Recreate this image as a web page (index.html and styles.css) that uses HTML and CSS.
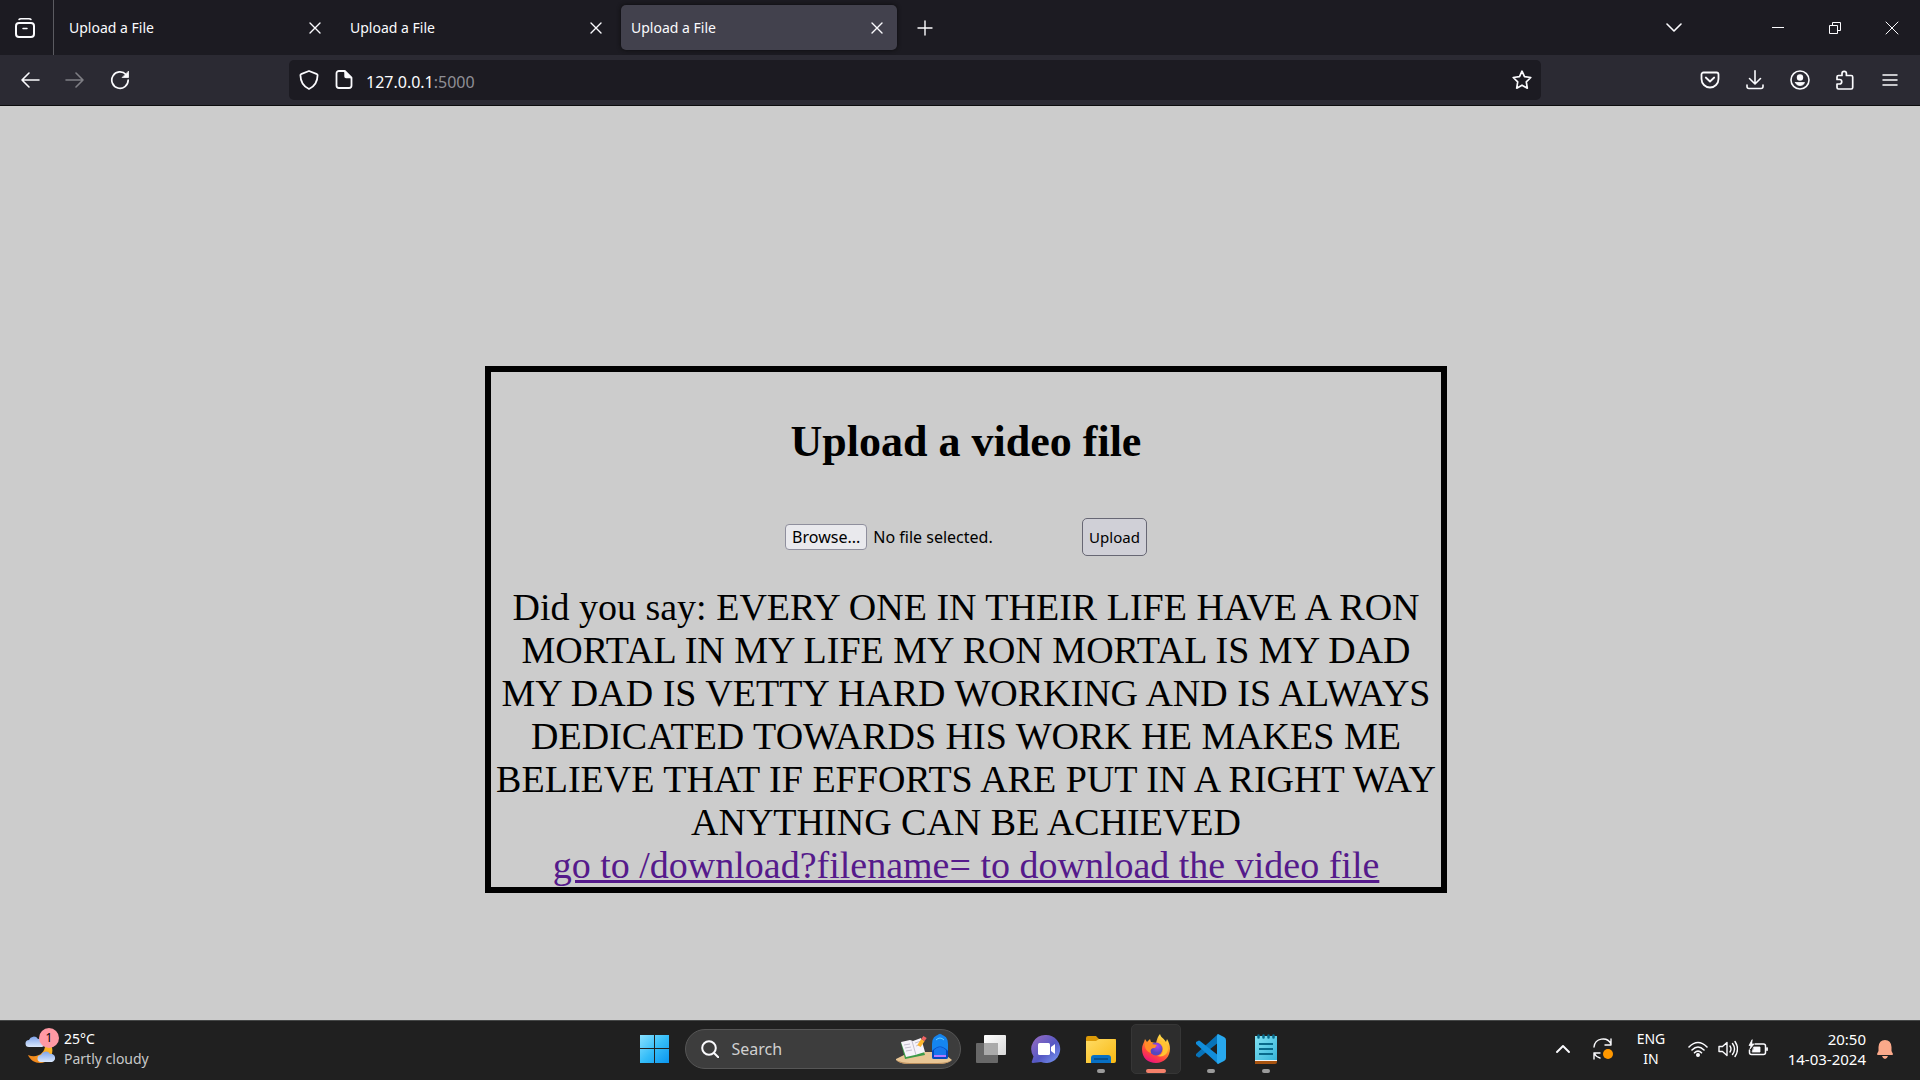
FILE: index.html
```html
<!DOCTYPE html>
<html lang="en">
<head>
<meta charset="utf-8">
<title>Upload a File</title>
<link rel="stylesheet" href="styles.css">
</head>
<body>
<header class="browser">
  <div class="tabstrip">
    <button class="view-btn" aria-label="Firefox View">
      <svg class="icon" width="20" height="20" viewBox="0 0 20 20"><rect x="1" y="5" width="18" height="14" rx="3" stroke-width="2"/><path d="M4 1.500C4.500.8 5 .8 6 .8h8c1 0 1.500 0 2 .7M8 10.500h4" stroke-width="1.500"/></svg>
    </button>
    <div class="tabs">
      <div class="tab"><span>Upload a File</span><button class="tab-close" aria-label="Close tab"><svg class="icon" width="12" height="12" viewBox="0 0 12 12"><path d="M1 1l10 10M11 1L1 11"/></svg></button></div>
      <div class="tab"><span>Upload a File</span><button class="tab-close" aria-label="Close tab"><svg class="icon" width="12" height="12" viewBox="0 0 12 12"><path d="M1 1l10 10M11 1L1 11"/></svg></button></div>
      <div class="tab tab-active"><span>Upload a File</span><button class="tab-close" aria-label="Close tab"><svg class="icon" width="12" height="12" viewBox="0 0 12 12"><path d="M1 1l10 10M11 1L1 11"/></svg></button></div>
      <button class="tool" aria-label="New tab"><svg class="icon" width="16" height="16" viewBox="0 0 16 16"><path d="M8 1v14M1 8h14"/></svg></button>
    </div>
    <button class="tool all-tabs" aria-label="List all tabs"><svg class="icon" width="16" height="16" viewBox="0 0 16 16"><path d="M1 4l7 7 7-7" stroke-width="1.600"/></svg></button>
    <div class="window-buttons">
      <button aria-label="Minimize"><svg class="icon sharp" width="12" height="12" viewBox="0 0 12 12"><path d="M0 5.500h12"/></svg></button>
      <button aria-label="Restore"><svg class="icon sharp" width="12" height="12" viewBox="0 0 12 12"><path d="M.5 3.500h8v8h-8zM3.500 3V.5h8v8H9"/></svg></button>
      <button aria-label="Close"><svg class="icon thin" width="14" height="14" viewBox="0 0 14 14"><path d="M1 1l12 12M13 1L1 13"/></svg></button>
    </div>
  </div>
  <div class="toolbar">
    <button class="tool" aria-label="Back"><svg class="icon" width="20" height="20" viewBox="0 0 20 20"><path d="M19 10H2M9 3l-7 7 7 7" stroke-width="1.600"/></svg></button>
    <button class="tool" aria-label="Forward" disabled><svg class="icon" width="20" height="20" viewBox="0 0 20 20"><path d="M1 10h17M11 3l7 7-7 7" stroke-width="1.600"/></svg></button>
    <button class="tool" aria-label="Reload"><svg class="icon" width="20" height="20" viewBox="0 0 20 20"><path d="M16 4.500A8.200 8.200 0 1 0 18.200 10" stroke-width="1.700"/><path class="solid" d="M18.500 1.500v6h-6z" stroke-width=".8"/></svg></button>
    <div class="urlbar">
      <button class="url-btn" aria-label="Tracking protection"><svg class="icon" width="20" height="20" viewBox="0 0 20 20"><path d="M10 1l8 3.200c.4.200.6.400.6.800C18.500 12 15.500 16.500 10 19 4.500 16.500 1.500 12 1.400 5c0-.4.200-.6.600-.8z" stroke-width="1.800"/></svg></button>
      <button class="url-btn" aria-label="Site information"><svg class="icon" width="20" height="20" viewBox="0 0 20 20"><path d="M10.500 1H5a2.500 2.500 0 0 0-2.500 2.500v12A2.500 2.500 0 0 0 5 18h10a2.500 2.500 0 0 0 2.500-2.500V8z" stroke-width="1.800"/><path class="solid" d="M11 1l6.500 6.500H12a1 1 0 0 1-1-1z"/></svg></button>
      <div class="address">127.0.0.1<span>:5000</span></div>
      <button class="url-btn" aria-label="Bookmark this page"><svg class="icon" width="20" height="20" viewBox="0 0 20 20"><path d="M10 1.200l2.500 5.500 6.300.8-4.500 4.300 1 6.400-5.300-3-5.300 3 1-6.400L1.200 7.500l6.300-.8z" stroke-width="1.700"/></svg></button>
    </div>
    <button class="tool" aria-label="Save to Pocket"><svg class="icon" width="20" height="20" viewBox="0 0 20 20"><path d="M3.500 2.500h13a2 2 0 0 1 2 2V9a8.500 8.500 0 0 1-17 0V4.500a2 2 0 0 1 2-2zM5.800 7.500l4.200 4 4.200-4" stroke-width="1.800"/></svg></button>
    <button class="tool" aria-label="Downloads"><svg class="icon" width="20" height="20" viewBox="0 0 20 20"><path d="M10 .8v12.500M4.500 8.500l5.500 5.500 5.500-5.500M2 15v1.500a2 2 0 0 0 2 2h12a2 2 0 0 0 2-2V15" stroke-width="1.600"/></svg></button>
    <button class="tool" aria-label="Account"><svg class="icon" width="20" height="20" viewBox="0 0 20 20"><circle cx="10" cy="10" r="9" stroke-width="1.600"/><circle class="solid" cx="10" cy="7.500" r="2.500"/><path class="solid" d="M5.500 12.500h9c-.6 2-2.300 3-4.500 3s-3.900-1-4.500-3z" stroke-width=".8"/></svg></button>
    <button class="tool" aria-label="Extensions"><svg class="icon" width="20" height="20" viewBox="0 0 20 20"><path d="M2 9V7a1.500 1.500 0 0 1 1.500-1.500H7v-2a2.200 2.200 0 0 1 4.400 0v2h4.800A1.500 1.500 0 0 1 17.700 7v10.500A1.500 1.500 0 0 1 16.200 19H3.500A1.500 1.500 0 0 1 2 17.500V14h2.500a2.200 2.200 0 0 0 0-4.500H2z" stroke-width="1.700"/></svg></button>
    <button class="tool" aria-label="Menu"><svg class="icon" width="16" height="16" viewBox="0 0 16 16"><path d="M1 3h14M1 8h14M1 13h14" stroke-width="1.500"/></svg></button>
  </div>
</header>

<main class="page">
  <section class="card">
    <h1>Upload a video file</h1>
    <form class="upload-form">
      <div class="file-field">
        <input class="file-input" type="file" id="video" accept="video/*">
        <label class="browse" for="video">Browse...</label>
        <span>No file selected.</span>
      </div>
      <button class="upload" type="submit">Upload</button>
    </form>
    <p>Did you say: EVERY ONE IN THEIR LIFE HAVE A RON MORTAL IN MY LIFE MY RON MORTAL IS MY DAD MY DAD IS VETTY HARD WORKING AND IS ALWAYS DEDICATED TOWARDS HIS WORK HE MAKES ME BELIEVE THAT IF EFFORTS ARE PUT IN A RIGHT WAY ANYTHING CAN BE ACHIEVED</p>
    <a href="#download">go to /download?filename= to download the video file</a>
  </section>
</main>

<footer class="taskbar">
  <button class="weather">
    <span class="weather-icon">
      <svg width="30" height="30" viewBox="0 0 30 30">
        <defs>
          <linearGradient id="cloud" x1="0" y1="0" x2="0" y2="1"><stop offset="0" stop-color="#7fa4ea"/><stop offset="1" stop-color="#dbe9fd"/></linearGradient>
          <linearGradient id="moon" x1="1" y1="0" x2="0" y2="1"><stop offset="0" stop-color="#ffc52b"/><stop offset="1" stop-color="#ef7a18"/></linearGradient>
        </defs>
        <path fill="url(#moon)" d="M25 9c6 9 0 20-10 20-5 0-10-3-12-8 9 4 18-2 17-11z"/>
        <path fill="url(#cloud)" d="M4 13a3.500 3.500 0 0 1 0-7 5 5 0 0 1 9-1 5 4 0 0 1 4 8z"/>
        <path fill="url(#cloud)" d="M16 28a3.500 3.500 0 0 1 0-7 5 5 0 0 1 9-1 4 4 0 0 1 2 8z"/>
      </svg>
      <span class="badge">1</span>
    </span>
    <span class="weather-text"><span>25°C</span><span class="dim">Partly cloudy</span></span>
  </button>

  <nav class="apps">
    <button class="app" aria-label="Start"><svg width="30" height="30" viewBox="0 0 30 30"><defs><linearGradient id="win" gradientUnits="userSpaceOnUse" x1="1" y1="1" x2="29" y2="29"><stop offset="0" stop-color="#86e0ff"/><stop offset=".5" stop-color="#35bdf8"/><stop offset="1" stop-color="#0a95ee"/></linearGradient></defs><path fill="url(#win)" d="M0 1h14v13H0zM15 1h14v13H15zM0 15h14v14H0zM15 15h14v14H15z"/></svg></button>
    <button class="search">
      <svg class="icon" width="18" height="18" viewBox="0 0 18 18"><circle cx="8" cy="8" r="6.800" stroke-width="2"/><path d="M13 13l4.500 4.500" stroke-width="2"/></svg>
      <span>Search</span>
      <svg class="art" width="58" height="32" viewBox="0 0 58 32">
        <path fill="#e9c695" d="M1 26l14-7h32l10 8q-4 4-14 4H14Q5 31 1 27z"/>
        <path fill="#b98d5c" d="M1 27q6 3 14 3h28q10 0 14-3-4 4-14 4H14Q5 31 1 27z"/>
        <path fill="#3d9b49" d="M6 10l19-3 5 15-20 4z"/><path fill="#f6f3fa" d="M6 9l9-2 3 1 8-3 4 14-10 3-9 2z"/>
        <path stroke="#c4c0cf" stroke-width="1" fill="none" d="M17 8l4 14M9 12l6-1M10 15l6-1M11 18l6-1M20 10l6-2M21 13l6-2"/>
        <path stroke="#ffb52c" stroke-width="4" d="M24 13l4-6"/><path stroke="#f06262" stroke-width="4" d="M28 7l2-3"/>
        <path fill="none" stroke="#1682e8" stroke-width="1.500" d="M42 4q3-5 6 0"/>
        <path fill="#1585f0" d="M37 11q0-9 8-9t8 9v13q0 2-2 2H39q-2 0-2-2z"/><path fill="#0648bd" d="M37 18q8-9 16 0v6q0 2-2 2H39q-2 0-2-2z"/><path fill="#1877ed" d="M39 17q6-6 12 0v5H39z"/><path stroke="#b678ff" stroke-width="2" d="M39 23h12"/><path stroke="#63d0ff" stroke-width="1" d="M41 7q4-4 8 0" fill="none"/>
      </svg>
    </button>
    <button class="app" aria-label="Task view"><svg width="30" height="30" viewBox="0 0 30 30"><defs><linearGradient id="tv" x1="0" y1="0" x2="1" y2="1"><stop offset="0" stop-color="#fff"/><stop offset="1" stop-color="#d8d8d8"/></linearGradient></defs><rect x="8" y="1" width="22" height="20" rx="1" fill="url(#tv)"/><rect y="9" width="22" height="20" rx="1" fill="#686868"/><path fill="#aaa" d="M8 9h14v12H8z"/></svg></button>
    <button class="app" aria-label="Chat"><svg width="30" height="30" viewBox="0 0 30 30"><defs><linearGradient id="chat" x1="0" y1="0" x2="1" y2="1"><stop offset="0" stop-color="#9c6cc0"/><stop offset=".55" stop-color="#5558c4"/><stop offset="1" stop-color="#7a9cf5"/></linearGradient></defs><path fill="url(#chat)" d="M15 1a14 14 0 1 1-5 27L2 29q-2 0-1-2l1.500-4.500A14 14 0 0 1 15 1z"/><rect x="7" y="9" width="12" height="12" rx="1.500" fill="#fff"/><path fill="#fff" d="M20 13l4-3v10l-4-3z"/></svg></button>
    <button class="app running" aria-label="File Explorer"><svg width="30" height="30" viewBox="0 0 30 30"><defs><linearGradient id="folder" x1="0" y1="0" x2="1" y2="1"><stop offset="0" stop-color="#ffdc65"/><stop offset="1" stop-color="#f9b912"/></linearGradient></defs><path fill="#dc9a08" d="M0 4q0-2 2-2h8l3 3h17v9H0z"/><path fill="url(#folder)" d="M0 7h10l3-2h15q2 0 2 2v20q0 2-2 2H0z"/><path fill="#0870c4" d="M5 29v-5q0-3 3-3h14q3 0 3 3v5z"/><path stroke="#064780" stroke-width="1.500" d="M8 25h14"/></svg></button>
    <button class="app current" aria-label="Firefox"><svg width="30" height="30" viewBox="0 0 30 30"><defs><linearGradient id="fox" x1=".8" y1="0" x2=".3" y2="1"><stop offset="0" stop-color="#fff052"/><stop offset=".4" stop-color="#ffa029"/><stop offset=".72" stop-color="#ff443f"/><stop offset="1" stop-color="#eb1180"/></linearGradient><radialGradient id="globe" cx=".6" cy=".3"><stop offset="0" stop-color="#ad43ef"/><stop offset="1" stop-color="#5348be"/></radialGradient></defs><path fill="url(#fox)" d="M19 0c1 4 4 4 6 8l1-3c7 11 1 24-11 24C7 29 1 24 1 15c0-4 2-6 3-10l2 3 3-3 1 3 5 1c1-4 2-7 4-9z"/><circle cx="15" cy="15" r="6.500" fill="url(#globe)"/><path fill="#ff8d27" d="M4 9q5-2 7 1l5 1-2 3c-4 0-5 2-4 5-4-1-7-5-6-10z"/><path fill="#ffc332" d="M17 8q5 2 5 7 0 6-6 7 9 2 11-6 0-5-4-9z"/></svg></button>
    <button class="app running" aria-label="Visual Studio Code"><svg width="30" height="30" viewBox="0 0 30 30"><path fill="#0873b9" d="M0 20q-1 1 0 2l2 1q1 1 2 0L23 8V1q-1-1-2 0z"/><path fill="#118ddb" d="M0 10q-1-1 0-2l2-1q1-1 2 0l19 15v7q-1 1-2 0z"/><path fill="#28a8ee" d="M22 0l6 3q2 1 2 3v18q0 2-2 3l-6 3q-1 0-1-2V2q0-2 1-2z"/></svg></button>
    <button class="app running" aria-label="Notepad"><svg width="30" height="30" viewBox="0 0 30 30"><defs><linearGradient id="note" x1="0" y1="0" x2="1" y2="1"><stop offset="0" stop-color="#82e2f3"/><stop offset="1" stop-color="#36b4d8"/></linearGradient></defs><path fill="#a8530f" d="M4 25h22v3q0 2-2 2H4z"/><path fill="#f4f4f4" d="M4 24h22v3H4z"/><path fill="url(#note)" d="M4 2h22v24H4z"/><path stroke="#086a8b" stroke-width="2" d="M8 10h14M8 15h14M8 20h14"/><path stroke="#086a8b" stroke-width="2.500" stroke-linecap="round" d="M7.500 1.500v2M12.500 1.500v2M17.500 1.500v2M22.500 1.500v2"/></svg></button>
  </nav>

  <div class="tray">
    <button class="tray-btn" aria-label="Hidden icons"><svg class="icon" width="14" height="14" viewBox="0 0 14 14"><path d="M1 10l6-6 6 6" stroke-width="1.900"/></svg></button>
    <button class="tray-btn" aria-label="Updates"><svg class="icon thin" width="22" height="22" viewBox="0 0 22 22"><path d="M2 9a9 9 0 0 1 17-3M19 1v6h-6M2 21v-6h6M2 15q2 4 6 5" stroke-width="1.400"/><circle cx="16" cy="16" r="5" fill="#ff9800" stroke="none"/></svg></button>
    <button class="language"><span>ENG</span><span>IN</span></button>
    <button class="status" aria-label="Network, sound, battery">
      <svg class="icon" width="20" height="20" viewBox="0 0 20 20"><path d="M1 8q9-9 18 0M4 11q6-6 12 0M6.500 13.800q3.500-3.500 7 0" stroke-width="1.600"/><circle class="solid" cx="10" cy="16" r="1.300"/></svg>
      <svg class="icon" width="20" height="20" viewBox="0 0 20 20"><path d="M1 7.500h3.500L9 3.500v13l-4.500-4H1zM12 7q2 3 0 6M14.500 4.500q4 5.500 0 11M17 2.500q5 7.500 0 15" stroke-width="1.400"/></svg>
      <svg class="icon" width="20" height="20" viewBox="0 0 20 20"><path d="M7 5h8.500a2 2 0 0 1 2 2v6.500a2 2 0 0 1-2 2h-12a2 2 0 0 1-2-2V11" stroke-width="1.500"/><path class="solid" d="M6 8h6v5H4.500zM18.500 9v2.500h1V9zM4 1L1 6.500h2L2 10l4-5H4z" stroke-width=".8"/></svg>
    </button>
    <button class="clock"><span>20:50</span><span>14-03-2024</span></button>
    <button class="bell" aria-label="Notifications"><svg width="18" height="20" viewBox="0 0 18 20"><path fill="#fba98a" d="M9 1q6 0 6.500 7v4l1.500 3q0 1-1 1H2q-1 0-1-1l1.500-3V8Q3 1 9 1zM6 17h6q-1 3-3 3t-3-3z"/></svg></button>
  </div>
</footer>
</body>
</html>
```
FILE: styles.css
```css
* {
  box-sizing: border-box;
}

body {
  margin: 0;
  min-height: 100vh;
  display: flex;
  flex-direction: column;
  font-family: "Noto Sans", sans-serif;
  font-size: 14px;
  color: #fbfbfe;
}

button {
  margin: 0;
  padding: 0;
  border: 0;
  background: none;
  color: inherit;
  font: inherit;
}

svg {
  display: block;
  flex: none;
}

.icon {
  fill: none;
  stroke: #fbfbfe;
  stroke-width: 1.4px;
  stroke-linecap: round;
  stroke-linejoin: round;
}

.solid {
  fill: #fbfbfe;
}

.sharp {
  stroke-width: 1px;
  stroke-linecap: butt;
  stroke-linejoin: miter;
}

.thin {
  stroke-width: 1px;
}

/* Browser window */
.browser {
  border-bottom: 1px solid #0c0c0d;
}

.tabstrip {
  display: flex;
  height: 55px;
  background: #1c1b22;
}

.view-btn {
  width: 54px;
  padding-left: 15px;
  border-right: 1px solid #5b5b61;
}

.tabs {
  flex: 1;
  display: flex;
  align-items: center;
  gap: 5px;
  padding-left: 5px;
}

.tab {
  width: 276px;
  height: 45px;
  padding: 0 14px 0 10px;
  display: flex;
  align-items: center;
  justify-content: space-between;
  border-radius: 5px;
}

.tab-active {
  background: #42414d;
  box-shadow: 0 0 4px #0c0c0d;
}

.tool {
  width: 45px;
  height: 45px;
  display: grid;
  place-items: center;
}

.tool:disabled {
  opacity: 0.4;
}

.all-tabs {
  margin: 5px 53px 0 0;
}

.window-buttons {
  display: flex;
}

.window-buttons button {
  width: 57px;
  display: grid;
  place-items: center;
}

.toolbar {
  display: flex;
  align-items: center;
  height: 50px;
  padding: 0 8px 0 7px;
  background: #2b2a33;
}

.urlbar {
  flex: 1;
  display: flex;
  align-items: center;
  height: 40px;
  margin: 0 146px 0 147px;
  padding: 0 2px;
  border-radius: 5px;
  background: #1c1b22;
}

.url-btn {
  width: 35px;
  display: grid;
  place-items: center;
}

.address {
  flex: 1;
  padding: 3px 0 0 5px;
  font-size: 16px;
}

.address span {
  color: #8f8f96;
}

/* Page */
.page {
  flex: 1;
  padding: 260px 0 24px 12px;
  background: #ccc;
  color: #000;
}

.card {
  width: 962px;
  max-width: 100%;
  margin: 0 auto;
  border: 6px solid #000;
  font-family: "Liberation Serif", serif;
  font-size: 38px;
  line-height: 43px;
  text-align: center;
}

.card h1 {
  margin: 44px 0 50px;
  font-size: 44px;
  line-height: 52px;
}

.card p {
  margin: 0;
}

.card a {
  display: block;
  color: #551a8b;
}

.upload-form {
  display: flex;
  justify-content: center;
  align-items: center;
  margin-bottom: 30px;
  font-family: "Noto Sans", sans-serif;
  font-size: 15px;
  line-height: 24px;
}

.file-field {
  position: relative;
  display: flex;
  align-items: center;
  gap: 6px;
  width: 297px;
  font-size: 16px;
}

.file-input {
  position: absolute;
  inset: 0;
  opacity: 0;
}

.browse {
  padding: 0 6px;
  border: 1px solid #8f8f9d;
  border-radius: 4px;
  background: #e9e9ed;
}

.upload {
  height: 38px;
  padding: 0 6px;
  border: 1px solid #676774;
  border-radius: 5px;
  background: #d0d0d7;
}

/* Taskbar */
.taskbar {
  display: grid;
  grid-template-columns: 1fr auto 1fr;
  height: 60px;
  padding-bottom: 3px;
  border-top: 1px solid #454747;
  background: #202020;
  color: #fff;
}

.weather {
  display: flex;
  align-items: center;
  gap: 9px;
  padding-left: 25px;
  text-align: left;
}

.weather-icon {
  position: relative;
}

.badge {
  position: absolute;
  top: -6px;
  left: 14px;
  width: 20px;
  height: 20px;
  border-radius: 10px;
  background: #ff99a4;
  color: #000;
  font-size: 12px;
  line-height: 20px;
  text-align: center;
}

.weather-text,
.language,
.clock {
  display: flex;
  flex-direction: column;
  justify-content: center;
  line-height: 20px;
}

.dim {
  color: #c8c8c8;
}

.apps {
  display: flex;
  align-items: center;
  gap: 5px;
}

.app {
  position: relative;
  width: 50px;
  height: 50px;
  display: grid;
  place-items: center;
  border: 1px solid transparent;
  border-radius: 5px;
}

.current {
  border-color: #363636;
  background: #2d2d2d;
}

.running::after,
.current::after {
  content: "";
  position: absolute;
  bottom: 0;
  left: 20px;
  width: 8px;
  height: 4px;
  border-radius: 2px;
  background: #9a9a9a;
}

.current::after {
  left: 14px;
  width: 20px;
  background: #f5806a;
}

.search {
  display: flex;
  align-items: center;
  gap: 13px;
  width: 276px;
  height: 40px;
  padding: 0 7px 0 15px;
  border: 1px solid #565656;
  border-radius: 20px;
  background: #3d3d3d;
  color: #d0d0d0;
  font-size: 16px;
}

.art {
  margin-left: auto;
}

.tray {
  display: flex;
  justify-content: flex-end;
  padding-right: 17px;
}

.tray-btn {
  width: 40px;
  display: grid;
  place-items: center;
}

.language {
  width: 56px;
  align-items: center;
}

.status {
  display: flex;
  align-items: center;
  gap: 10px;
  padding: 0 16px 0 9px;
}

.clock {
  align-items: flex-end;
  width: 82px;
  font-size: 15px;
  white-space: nowrap;
}

.bell {
  padding: 0 9px 0 10px;
}
```
